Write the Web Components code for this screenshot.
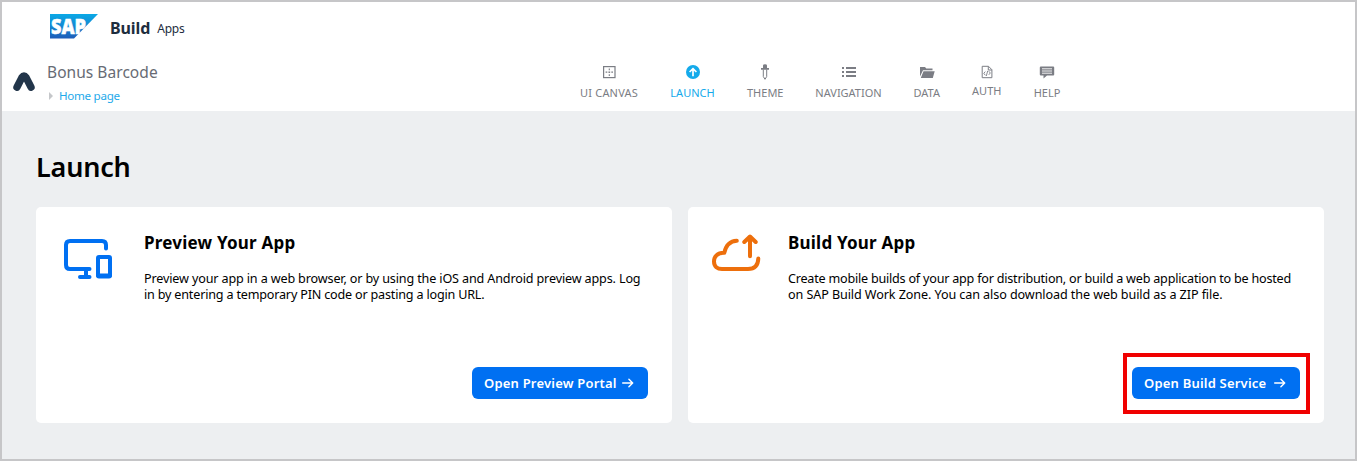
<!DOCTYPE html>
<html lang="en">
<head>
<meta charset="utf-8">
<title>Launch</title>
<style>
html,body{margin:0;height:100%;overflow:hidden}
body{font-family:"Noto Sans","Open Sans",sans-serif;color:#000}
</style>
</head>
<body>
<build-app></build-app>
<script>
function define(name, html){
  const t=document.createElement('template');
  t.innerHTML=html;
  customElements.define(name, class extends HTMLElement{
    constructor(){super();this.attachShadow({mode:'open'}).append(t.content.cloneNode(true));}
  });
}

define('sap-logo', `
<style>
:host{display:block;width:49px;height:25px}
svg{display:block;overflow:visible}
text{font:800 21px "Open Sans","Noto Sans",sans-serif;fill:#fff;stroke:#fff;stroke-width:.5}
</style>
<svg width="49" height="25" viewBox="0 0 49 25">
<defs><linearGradient id="g" x1="0" y1="0" x2="0" y2="1"><stop offset="0" stop-color="#0aa9e6"/><stop offset=".5" stop-color="#1587d2"/><stop offset="1" stop-color="#1e5cb8"/></linearGradient></defs>
<path d="M0 0H48L24 24.5H0Z" fill="url(#g)"/>
<text x="1" y="19.6" textLength="35" lengthAdjust="spacingAndGlyphs">SAP</text>
</svg>`);

define('product-bar', `
<style>
:host{display:flex;align-items:center;height:54px;padding-left:48px}
sap-logo{margin-bottom:5px}
b{font-size:16px;color:#1d2d3e;margin:0 0 2px 11px;letter-spacing:-.1px}
span{font-size:12px;color:#1d2d3e;margin:0 0 2px 7px;letter-spacing:-.2px}
</style>
<sap-logo></sap-logo><b>Build</b><span>Apps</span>`);

define('app-title', `
<style>
:host{display:flex;flex:none;width:578px;padding-left:10px;box-sizing:border-box}
svg{display:block}
.mark{margin-top:15px;flex:none}
.t{margin-left:11px;padding-top:5px}
h2{margin:0;font:400 15.5px/22px "Noto Sans",sans-serif;color:#676b74;letter-spacing:.05px;white-space:nowrap}
.c{display:flex;align-items:center;height:16px;margin-top:5px;font-size:11.6px;line-height:16px;color:#1eaaea;white-space:nowrap;letter-spacing:-.28px}
.c svg{margin:0 6px 0 2px}
</style>
<svg class="mark" width="24" height="22" viewBox="0 0 24 22"><path d="M5 16.2L10 6.3Q12 3.4 14 6.3L19 16.2" fill="none" stroke="#22354a" stroke-width="7.4" stroke-linecap="round" stroke-linejoin="round"/><path d="M8.6 20L11.8 12L15.2 20Z" fill="#fff"/></svg>
<div class="t"><h2><slot name="name"></slot></h2><div class="c"><svg width="4" height="8"><path d="M0 0L4 4L0 8Z" fill="#c5c7ca"/></svg><slot name="page"></slot></div></div>`);

define('nav-item', `
<style>
:host{display:flex;flex-direction:column;align-items:center;color:#7b7d84;font-size:11px;line-height:15px;white-space:nowrap}
:host([active]){color:#14aaeb}
.i{height:16px;width:16px;margin-bottom:5px}
</style>
<div class="i"><slot name="icon"></slot></div><slot></slot>`);

define('main-nav', `
<style>
:host{display:flex;gap:32px;padding-top:8px}
svg{display:block;width:16px;height:16px;fill:none;stroke:currentColor}
nav-item{flex:none}
.auth{margin-top:-2px}
.auth svg{margin-top:2px}
</style>
<nav-item style="width:58px;letter-spacing:.2px"><svg slot="icon" viewBox="0 0 16 16"><rect x="2.6" y="2.6" width="11.4" height="11" stroke-width="1.2"/><path d="M8.3 4.5v1.7M8.3 7.4v1.6M8.3 10.2v1.7M4.6 8.1h1.7M7.4 8.1h1.8M10.3 8.1h1.7" stroke-width="1.1"/></svg>UI CANVAS</nav-item>
<nav-item active style="width:45px"><svg slot="icon" viewBox="0 0 16 16"><circle cx="8" cy="8" r="7" fill="currentColor" stroke="none"/><path d="M8 12.3V5M4.6 8L8 4.6L11.4 8" stroke="#fff" stroke-width="1.7"/></svg>LAUNCH</nav-item>
<nav-item style="width:36.5px"><svg slot="icon" viewBox="0 0 16 16"><path d="M6 1.5Q6 .2 8 .2T10 1.5V4h2v1.8H4V4h2Z" fill="currentColor" stroke="none"/><path d="M6.3 5.5V12.5L8 15.3L9.7 12.5V5.5" stroke-width="1"/></svg>THEME</nav-item>
<nav-item style="width:66px"><svg slot="icon" viewBox="0 0 16 16"><path d="M1 4h2M1 8h2M1 12h2M5 4h10M5 8h10M5 12h10" stroke-width="1.8"/></svg>NAVIGATION</nav-item>
<nav-item style="width:26.5px"><svg slot="icon" viewBox="0 0 16 16"><path d="M1 12.5V3H6L7.3 4.5H13.5V6.3H4Z M4.5 7.2H15.7L13.8 14H1.8Z" fill="currentColor" stroke="none"/></svg>DATA</nav-item>
<nav-item class="auth" style="width:29.5px"><svg slot="icon" viewBox="0 0 16 16"><path d="M3.2 2.3H9.5L12.9 5.7V13.7H3.2ZM9.3 2.5V6H12.8" stroke-width="1"/><path d="M6.3 7.6L4.8 9.3L6.3 11.3M9.8 7.2L11.3 9L9.8 10.8M8.7 6.8L7.3 12" stroke-width=".9"/></svg>AUTH</nav-item>
<nav-item style="width:27px"><svg slot="icon" viewBox="0 0 16 16"><path d="M1.8 2.5H14.2Q15.2 2.5 15.2 3.5V10.5Q15.2 11.5 14.2 11.5H8L4.5 14.5V11.5H1.8Q.8 11.5 .8 10.5V3.5Q.8 2.5 1.8 2.5Z" fill="currentColor" stroke="none"/><path d="M3 4.8H13M3 7H13M3 9.2H13" stroke="#fff" stroke-width=".9"/></svg>HELP</nav-item>`);

define('action-button', `
<style>
:host{display:inline-flex;position:relative;align-items:center;box-sizing:border-box;height:32px;padding:0 14px 0 12px;border-radius:6px;background:#0070f2;color:#fff;font-weight:600;font-size:13px;letter-spacing:.2px;white-space:nowrap;justify-content:space-between}
:host([highlight])::after{content:"";position:absolute;inset:-14px -10px -15px -9px;border:4px solid #f00000}
span{margin-bottom:1px}
svg{display:block}
</style>
<span><slot></slot></span><svg width="12" height="10" viewBox="0 0 12 10"><path d="M.7 5H10.6M6.9 1.2L10.7 5L6.9 8.8" fill="none" stroke="#fff" stroke-width="1.4" stroke-linecap="round" stroke-linejoin="round"/></svg>`);

define('launch-card', `
<style>
:host{display:grid;box-sizing:border-box;grid-template-columns:var(--lead) minmax(0,1fr);grid-template-rows:auto 1fr auto;height:216px;padding:24px;background:#fff;border-radius:5px}
h3{margin:0;font-size:17px;line-height:24px;font-weight:700;letter-spacing:.22px;white-space:nowrap}
p{margin:16px 0 0;font-size:12.6px;line-height:16px;white-space:nowrap}
.icon{grid-row:1/3}
.b{grid-column:1/3;display:flex;justify-content:flex-end}
</style>
<div class="icon"><slot name="icon"></slot></div>
<h3><slot name="title"></slot></h3><p><slot></slot></p><div class="b"><slot name="action"></slot></div>`);

define('launch-page', `
<style>
:host{display:block;background:#edeff1;padding:38px 31px 0 34px;flex:1}
h1{margin:0;font-size:27px;line-height:36px;font-weight:600;letter-spacing:-.2px}
.cards{display:grid;grid-template-columns:636px 636px;gap:16px;margin-top:22px}
svg{display:block;fill:none;stroke-linecap:round;stroke-linejoin:round}
#l1{letter-spacing:-.145px}
#l2{letter-spacing:-.19px}
#l3{letter-spacing:-.22px}
#l4{letter-spacing:-.09px}
</style>
<h1>Launch</h1>
<div class="cards">
<launch-card style="--lead:84px">
<svg slot="icon" width="56" height="56" viewBox="0 0 56 56"><path d="M46 17.5V14Q46 10 42 10H10Q6 10 6 14V34Q6 38 10 38H29.5M26 38V46M20 46H29.5" stroke="#0070f2" stroke-width="4"/><rect x="38" y="26" width="12" height="19.5" rx="1" stroke="#0070f2" stroke-width="4"/><path d="M38 44.5H50" stroke="#0070f2" stroke-width="4"/></svg>
<span slot="title">Preview Your App</span><span id="l1">Preview your app in a web browser, or by using the iOS and Android preview apps. Log</span><br><span id="l2">in by entering a temporary PIN code or pasting a login URL.</span>
<action-button slot="action" style="width:176px">Open Preview Portal</action-button>
</launch-card>
<launch-card style="--lead:76px">
<svg slot="icon" width="56" height="56" viewBox="0 0 56 56"><path d="M24.8 9.8C18 10.2 13.8 15 12.3 21.8C5 21.7 2 26 2 30.5C2 35.5 5.5 38 10 38H36Q46 38 46.3 27.5M38 25.3V6.5M32.3 11L38 5.5L43.7 11" stroke="#ed6f0c" stroke-width="4"/></svg>
<span slot="title">Build Your App</span><span id="l3">Create mobile builds of your app for distribution, or build a web application to be hosted</span><br><span id="l4">on SAP Build Work Zone. You can also download the web build as a ZIP file.</span>
<action-button slot="action" highlight style="width:168px">Open Build Service</action-button>
</launch-card>
</div>`);

define('build-app', `
<style>
:host{display:flex;flex-direction:column;box-sizing:border-box;height:461px;border:2px solid #c6c6c8;background:#fff}
.bar{display:flex;height:55px}
</style>
<product-bar></product-bar>
<div class="bar"><app-title><span slot="name">Bonus Barcode</span><span slot="page">Home page</span></app-title><main-nav></main-nav></div>
<launch-page></launch-page>`);
</script>
</body>
</html>
